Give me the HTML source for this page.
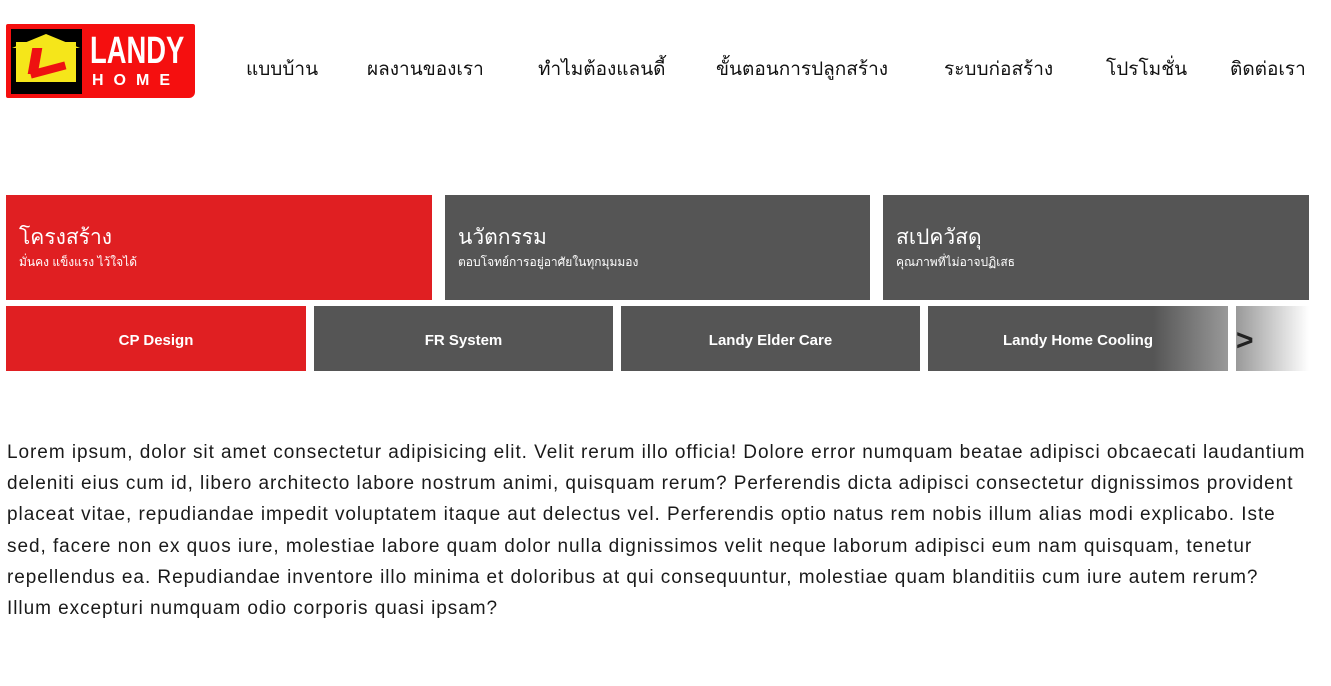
<!DOCTYPE html>
<html><head><meta charset="utf-8"><style>
*{margin:0;padding:0;box-sizing:border-box}
body{width:1331px;height:686px;background:#fff;font-family:"Liberation Sans","Noto Sans CJK SC",sans-serif;position:relative;overflow:hidden;color:#111}
.logo{position:absolute;left:6px;top:24px;width:189px;height:74px;background:#f50f0f;border-radius:2px 2px 6px 2px;overflow:hidden}
.logo .blk{position:absolute;left:5px;top:5px;width:71px;height:65px;background:#000}
.logo .house{position:absolute;left:10px;top:18px;width:60px;height:40px;background:#f5e61a}
.logo .roof{position:absolute;left:6px;top:10px;width:0;height:0;border-left:34px solid transparent;border-right:34px solid transparent;border-bottom:14px solid #f5e61a}
.logo .L{position:absolute;left:24px;top:24px;width:10px;height:26px;background:#e11;transform:skewX(-10deg)}
.logo .L2{position:absolute;left:24px;top:42px;width:36px;height:8px;background:#e11;transform:rotate(-15deg)}
.logo .t1{position:absolute;left:84px;top:6px;color:#fff;font:bold 38px/42px "Liberation Sans Narrow","Liberation Sans",sans-serif;transform:scaleX(.72);transform-origin:left}
.logo .t2{position:absolute;left:86px;top:48px;color:#fff;font:bold 16px/18px "Liberation Sans",sans-serif;letter-spacing:10px}
nav{position:absolute;top:54px;left:0;font-size:19px;color:#111}
nav span{position:absolute;white-space:nowrap}
.big{position:absolute;top:195px;height:105px;color:#fff;padding:30px 0 0 13px}
.big b{display:block;font-weight:normal;font-size:21px;line-height:26px}
.big i{display:block;font-style:normal;font-size:12px;margin-top:2px}
.sm{position:absolute;top:306px;height:65px;color:#fff;font-weight:bold;font-size:15px;display:flex;align-items:center;justify-content:center;padding-top:4px}
.red{background:#e01f22}.gr{background:#555}
p{position:absolute;left:7px;top:437px;width:1324px;font-size:19px;letter-spacing:0.95px;line-height:31.2px;color:#1a1a1a;white-space:nowrap}
</style></head><body>
<div class="logo"><div class="blk"></div><div class="roof"></div><div class="house"></div><div class="L"></div><div class="L2"></div><div class="t1">LANDY</div><div class="t2">HOME</div></div>
<nav>
<span style="left:246px">แบบบ้าน</span>
<span style="left:367px">ผลงานของเรา</span>
<span style="left:538px">ทำไมต้องแลนดี้</span>
<span style="left:716px">ขั้นตอนการปลูกสร้าง</span>
<span style="left:944px">ระบบก่อสร้าง</span>
<span style="left:1106px">โปรโมชั่น</span>
<span style="left:1230px">ติดต่อเรา</span>
</nav>
<div class="big red" style="left:6px;width:426px"><b>โครงสร้าง</b><i>มั่นคง แข็งแรง ไว้ใจได้</i></div>
<div class="big gr" style="left:445px;width:425px"><b>นวัตกรรม</b><i>ตอบโจทย์การอยู่อาศัยในทุกมุมมอง</i></div>
<div class="big gr" style="left:883px;width:426px"><b>สเปควัสดุ</b><i>คุณภาพที่ไม่อาจปฏิเสธ</i></div>
<div class="sm red" style="left:6px;width:300px">CP Design</div>
<div class="sm gr" style="left:314px;width:299px">FR System</div>
<div class="sm gr" style="left:621px;width:299px">Landy Elder Care</div>
<div class="sm" style="left:928px;width:300px;background:linear-gradient(90deg,#555 0,#555 75%,#999 100%)">Landy Home Cooling</div>
<div class="sm" style="left:1236px;width:73px;background:linear-gradient(90deg,#999,#fff);color:#222;font-size:30px;justify-content:flex-start;padding-left:0">&gt;</div>
<p>Lorem ipsum, dolor sit amet consectetur adipisicing elit. Velit rerum illo officia! Dolore error numquam beatae adipisci obcaecati laudantium<br>deleniti eius cum id, libero architecto labore nostrum animi, quisquam rerum? Perferendis dicta adipisci consectetur dignissimos provident<br>placeat vitae, repudiandae impedit voluptatem itaque aut delectus vel. Perferendis optio natus rem nobis illum alias modi explicabo. Iste<br>sed, facere non ex quos iure, molestiae labore quam dolor nulla dignissimos velit neque laborum adipisci eum nam quisquam, tenetur<br>repellendus ea. Repudiandae inventore illo minima et doloribus at qui consequuntur, molestiae quam blanditiis cum iure autem rerum?<br>Illum excepturi numquam odio corporis quasi ipsam?</p>
</body></html>
